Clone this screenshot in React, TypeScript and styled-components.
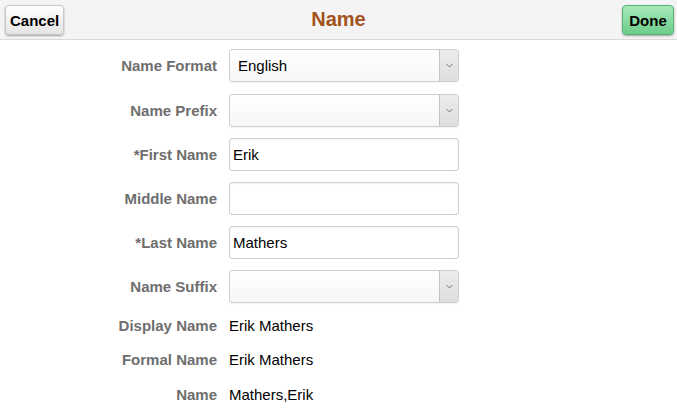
import * as React from 'react'
import styled, { createGlobalStyle } from 'styled-components'

const GlobalStyle = createGlobalStyle`
  html, body {
    margin: 0;
    padding: 0;
    background: #fff;
    font-family: Arial, "Liberation Sans", sans-serif;
  }
`

const Page = styled.div`
  width: 677px;
  height: 413px;
  overflow: hidden;
  background: #fff;
`

const Header = styled.div`
  height: 40px;
  box-sizing: border-box;
  background: #f4f4f4;
  border-bottom: 1px solid #d9d9d9;
  display: flex;
  align-items: center;
  justify-content: space-between;
  padding: 0 3px 0 5px;
  position: relative;
`

const Title = styled.div`
  position: absolute;
  left: 0;
  right: 0;
  text-align: center;
  font-size: 20px;
  font-weight: bold;
  color: #a2521a;
  pointer-events: none;
`

const HeaderButton = styled.button<{ $primary?: boolean }>`
  height: 30px;
  margin-top: 1px;
  padding: 0 4px;
  min-width: 52px;
  font-family: Arial, "Liberation Sans", sans-serif;
  font-size: 15px;
  font-weight: bold;
  color: #000;
  border-radius: 4px;
  border: 1px solid ${p => (p.$primary ? '#58b274' : '#c8c8c8')};
  background: ${p =>
    p.$primary
      ? 'linear-gradient(#a6e9b9, #6ccd8a)'
      : 'linear-gradient(#ffffff, #e4e4e4)'};
  box-shadow: 0 1px 2px rgba(0, 0, 0, 0.35);
`

const Form = styled.div`
  display: grid;
  grid-template-columns: 217px 230px;
  column-gap: 12px;
  padding-top: 2px;
`

const Label = styled.div<{ $h: number }>`
  height: ${p => p.$h}px;
  display: flex;
  align-items: center;
  justify-content: flex-end;
  font-size: 15px;
  font-weight: bold;
  color: #6e6e6e;
`

const Cell = styled.div<{ $h: number }>`
  height: ${p => p.$h}px;
  display: flex;
  align-items: center;
`

const TextBox = styled.div<{ $pad?: number }>`
  width: 230px;
  height: 33px;
  box-sizing: border-box;
  border: 1px solid #cfcfcf;
  border-radius: 3px;
  background: #fff;
  box-shadow: inset 0 1px 2px rgba(0, 0, 0, 0.06);
  display: flex;
  align-items: center;
  padding-left: ${p => p.$pad ?? 3}px;
  font-size: 15px;
  color: #000;
  position: relative;
  overflow: hidden;
`

const SelectBox = styled(TextBox)`
  background: linear-gradient(#ffffff, #f6f6f6);
  box-shadow: 0 1px 1px rgba(0, 0, 0, 0.05);
`

const Arrow = styled.div`
  position: absolute;
  right: 0;
  top: 0;
  bottom: 0;
  width: 18px;
  border-left: 1px solid #c4c4c4;
  background: linear-gradient(#ececec, #dedede);
  display: flex;
  align-items: center;
  justify-content: center;
`

const Value = styled.div`
  font-size: 15px;
  color: #000;
`

const Chevron = () => (
  <svg width="7" height="5" viewBox="0 0 7 5">
    <path d="M0.5 1 L3.5 4 L6.5 1" fill="none" stroke="#777" strokeWidth="1" />
  </svg>
)

type Field = { label: string; kind: 'select' | 'input' | 'text'; value: string; h: number }

const fields: Field[] = [
  { label: 'Name Format', kind: 'select', value: 'English', h: 46 },
  { label: 'Name Prefix', kind: 'select', value: '', h: 44 },
  { label: '*First Name', kind: 'input', value: 'Erik', h: 44 },
  { label: 'Middle Name', kind: 'input', value: '', h: 44 },
  { label: '*Last Name', kind: 'input', value: 'Mathers', h: 44 },
  { label: 'Name Suffix', kind: 'select', value: '', h: 44 },
  { label: 'Display Name', kind: 'text', value: 'Erik Mathers', h: 34 },
  { label: 'Formal Name', kind: 'text', value: 'Erik Mathers', h: 34 },
  { label: 'Name', kind: 'text', value: 'Mathers,Erik', h: 36 },
]

export default function App() {
  return (
    <Page>
      <GlobalStyle />
      <Header>
        <HeaderButton>Cancel</HeaderButton>
        <Title>Name</Title>
        <HeaderButton $primary>Done</HeaderButton>
      </Header>
      <Form>
        {fields.map(f => (
          <React.Fragment key={f.label}>
            <Label $h={f.h}>{f.label}</Label>
            <Cell $h={f.h}>
              {f.kind === 'select' && (
                <SelectBox $pad={8}>
                  {f.value}
                  <Arrow>
                    <Chevron />
                  </Arrow>
                </SelectBox>
              )}
              {f.kind === 'input' && <TextBox>{f.value}</TextBox>}
              {f.kind === 'text' && <Value>{f.value}</Value>}
            </Cell>
          </React.Fragment>
        ))}
      </Form>
    </Page>
  )
}
